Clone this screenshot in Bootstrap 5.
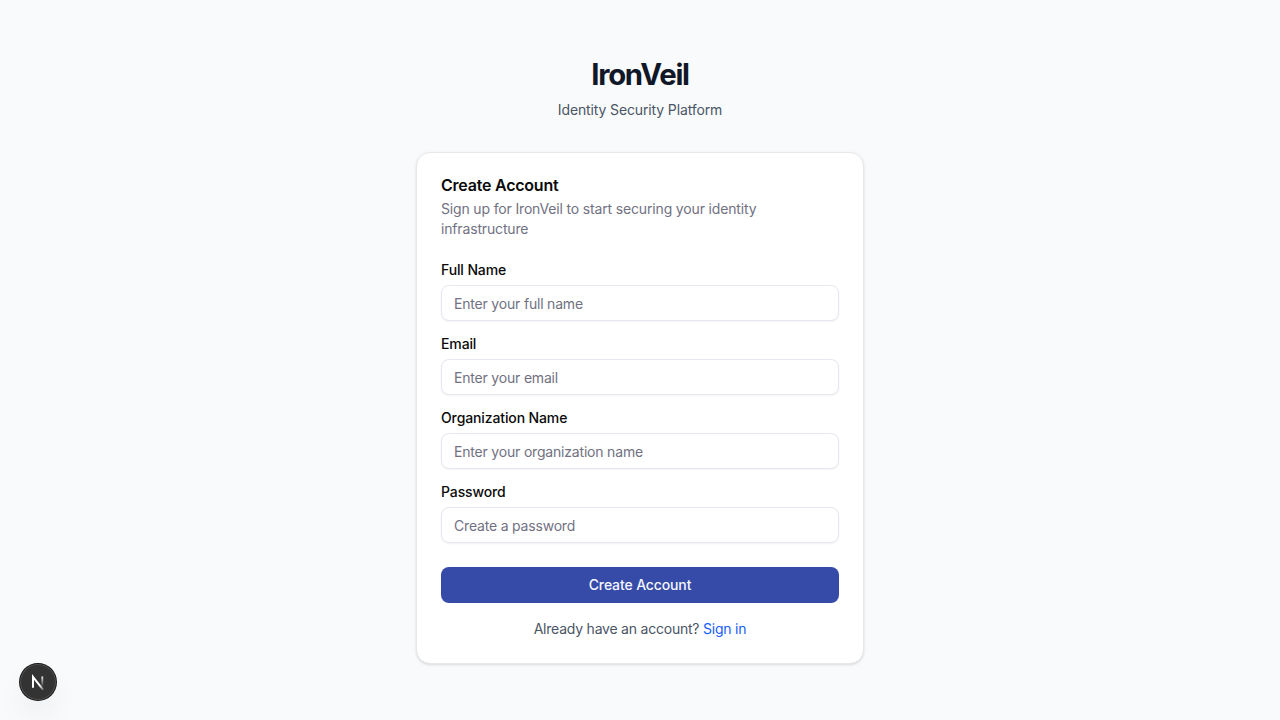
<!DOCTYPE html>
<html lang="en">
<head>
<meta charset="utf-8">
<meta name="viewport" content="width=device-width, initial-scale=1">
<title>IronVeil</title>
<link href="https://cdn.jsdelivr.net/npm/bootstrap@5.3.0/dist/css/bootstrap.min.css" rel="stylesheet">
<style>
body{background:#f9fafc;font-family:Inter,"Liberation Sans",sans-serif;font-size:14px;line-height:20px;color:#0a0a0a}
.auth{width:448px}
.brand{font-size:29.3px;line-height:38px;font-weight:700;letter-spacing:-1.25px;color:#101828;margin-bottom:6px}
.tagline{color:#4a5565;letter-spacing:-.13px}
.panel{border:1px solid #e7e8ea;border-radius:14px;padding:24px;box-shadow:0 1px 3px rgba(0,0,0,.1),0 1px 2px -1px rgba(0,0,0,.1)}
.panel-title{font-size:16px;line-height:16px;font-weight:600;letter-spacing:-.23px;margin-bottom:6px}
.muted{color:#717182;letter-spacing:-.16px}
.form-label{font-size:14px;line-height:14px;font-weight:500;letter-spacing:-.12px;display:block}
.form-control{height:36px;border:1px solid #e6e7ef;border-radius:8px;padding:4px 12px;font-size:14px;line-height:20px;letter-spacing:-.19px;box-shadow:0 1px 2px rgba(0,0,0,.05)}
.form-control::placeholder{color:#717182}
.btn-brand{--bs-btn-bg:#364aa8;--bs-btn-color:#f4f6ff;--bs-btn-hover-bg:#2f4196;--bs-btn-hover-color:#fff;height:36px;border:0;border-radius:8px;font-size:14px;line-height:20px;font-weight:500;letter-spacing:-.13px}
.switch-auth{letter-spacing:-.22px}
.signin{color:#155dfc}
.dev{left:20px;bottom:20px;width:36px;height:36px;background:#333;box-shadow:0 0 0 1px #171717,inset 0 0 0 1px rgba(255,255,255,.14),0 16px 32px -8px rgba(0,0,0,.16)}
</style>
</head>
<body>
<main class="min-vh-100 d-flex align-items-center justify-content-center">
<div class="auth">
<header class="text-center mb-4 pb-2"><h1 class="brand">IronVeil</h1><p class="tagline mb-0">Identity Security Platform</p></header>
<section class="card panel">
<h2 class="panel-title">Create Account</h2>
<p class="muted mb-4">Sign up for IronVeil to start securing your identity infrastructure</p>
<form>
<div class="mb-3"><label class="form-label mb-2" for="n">Full Name</label><input id="n" class="form-control" placeholder="Enter your full name"></div>
<div class="mb-3"><label class="form-label mb-2" for="e">Email</label><input id="e" type="email" class="form-control" placeholder="Enter your email"></div>
<div class="mb-3"><label class="form-label mb-2" for="o">Organization Name</label><input id="o" class="form-control" placeholder="Enter your organization name"></div>
<div class="mb-4"><label class="form-label mb-2" for="p">Password</label><input id="p" type="password" class="form-control" placeholder="Create a password"></div>
<button type="button" class="btn btn-brand w-100">Create Account</button>
</form>
<p class="tagline switch-auth text-center mt-3 mb-0">Already have an account? <a class="signin text-decoration-none" href="#">Sign in</a></p>
</section>
</div>
</main>
<button type="button" class="dev position-fixed rounded-circle border-0 p-0 d-flex" aria-label="Open developer tools">
<svg width="36" height="36" viewBox="0 0 36 36" fill="none">
<defs>
<linearGradient id="diag" x1="20" y1="21" x2="24.6" y2="27" gradientUnits="userSpaceOnUse"><stop stop-color="#fff"/><stop offset="1" stop-color="#fff" stop-opacity="0"/></linearGradient>
<linearGradient id="stem" x1="0" y1="13" x2="0" y2="23" gradientUnits="userSpaceOnUse"><stop stop-color="#fff" stop-opacity=".85"/><stop offset="1" stop-color="#fff" stop-opacity="0"/></linearGradient>
</defs>
<path d="M23.2 25.8 13 12.8V23.8" stroke="url(#diag)" stroke-width="2"/>
<path d="M22.3 12.4V23" stroke="url(#stem)" stroke-width="1.8"/>
</svg>
</button>
<script src="https://cdn.jsdelivr.net/npm/bootstrap@5.3.0/dist/js/bootstrap.bundle.min.js"></script>
</body>
</html>
